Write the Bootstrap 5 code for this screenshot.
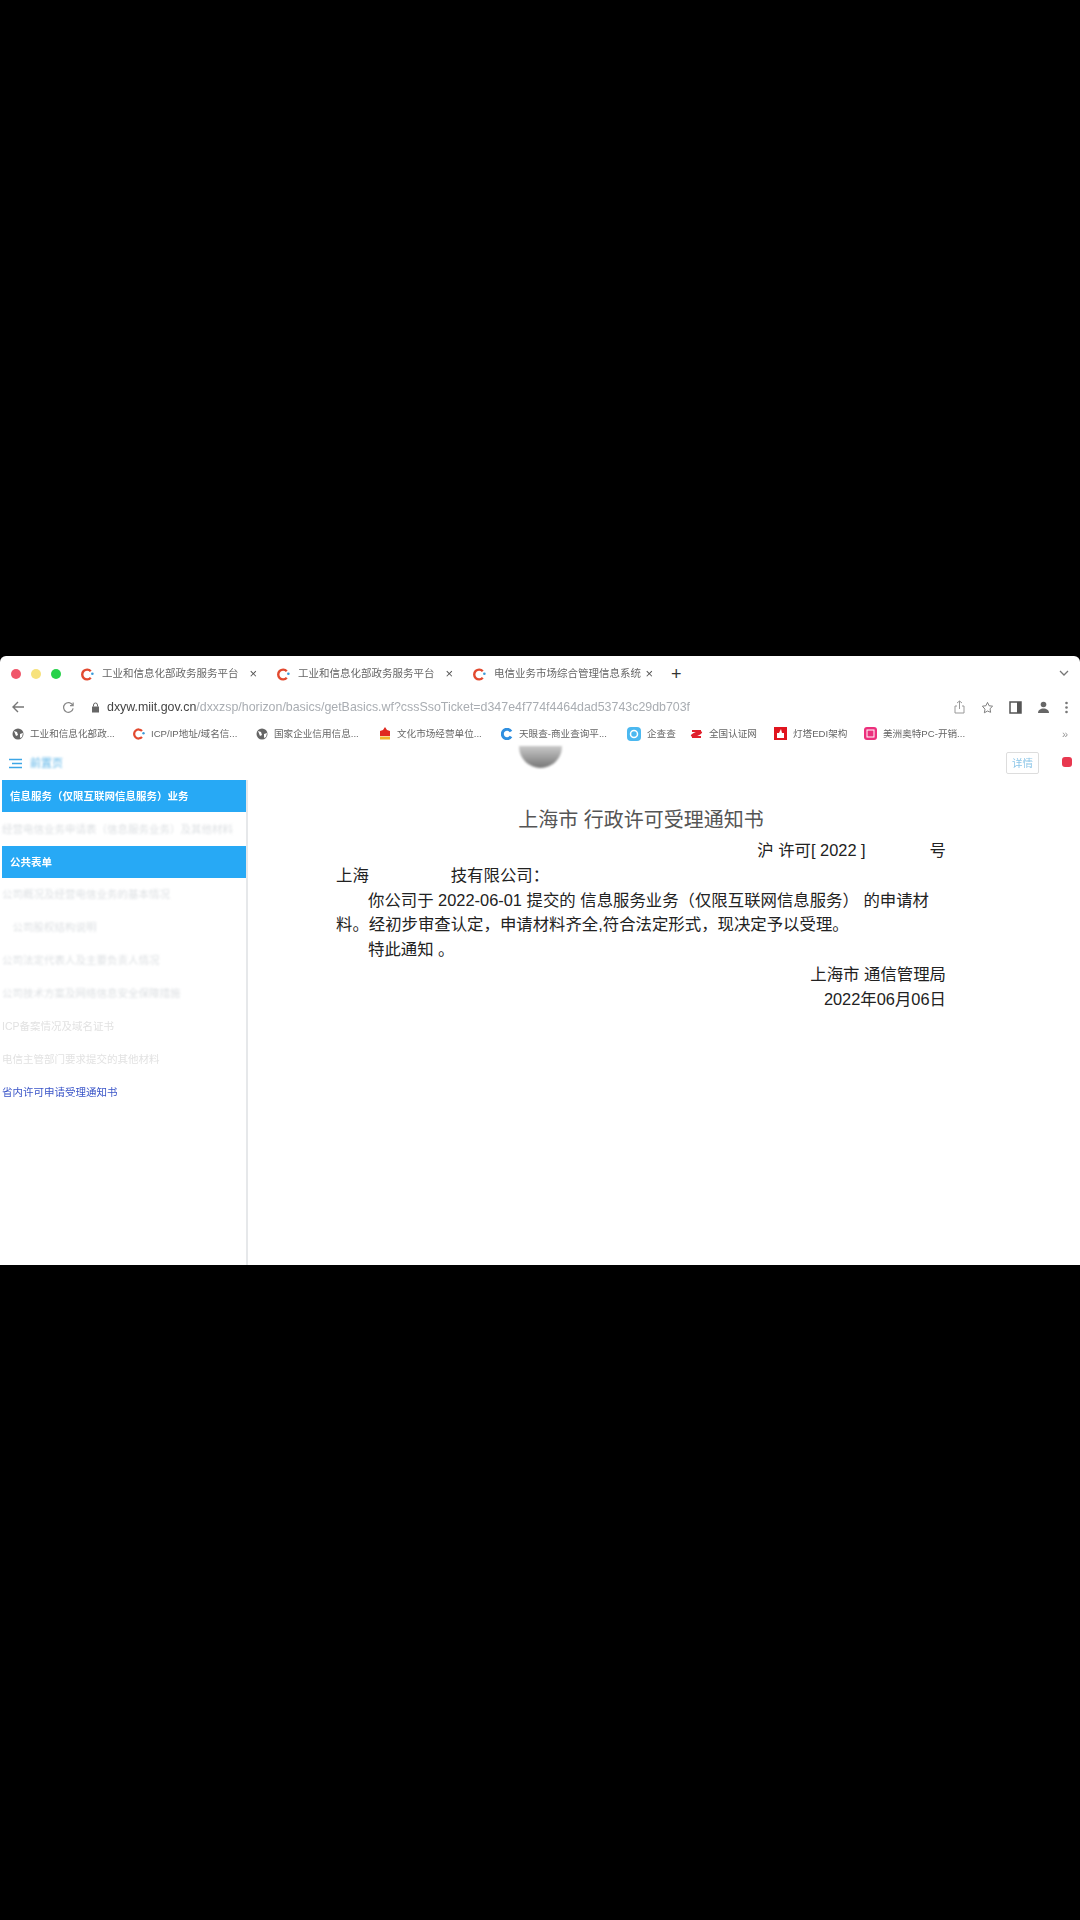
<!DOCTYPE html>
<html lang="zh-CN">
  <head>
    <meta charset="UTF-8" />
    <meta name="viewport" content="width=device-width, initial-scale=1.0" />
    <title>上海市 行政许可受理通知书</title>
    <link href="https://cdn.jsdelivr.net/npm/bootstrap@5.3.0/dist/css/bootstrap.min.css" rel="stylesheet" />
    <style>
      html, body { background: #000; margin: 0; }
      body { font-family: "Liberation Sans", "Noto Sans CJK SC", sans-serif; height: 1920px; overflow: hidden; padding-top: 656px; }
      .screen { background: #fff; height: 609px; width: 1080px; border-radius: 6px 6px 0 0; overflow: hidden; }

      .tabstrip { height: 36px; font-size: 10.5px; color: #666; position: relative; }
      .dot { width: 10px; height: 10px; border-radius: 50%; }
      .dot-red { background: #f0566a; margin-left: 11px; }
      .dot-yellow { background: #f7e27c; margin-left: 10px; }
      .dot-green { background: #27d24a; margin-left: 10px; }
      .tab-item { display: flex; align-items: center; height: 100%; padding-left: 6px; filter: blur(.35px); }
      .tab-one { width: 196px; margin-left: 14px; }
      .tab-two { width: 196px; }
      .tab-three { width: 200px; }
      .tab-item svg { margin-right: 8px; flex: none; }
      .tab-name { flex: 1; white-space: nowrap; overflow: hidden; }
      .tab-close { font-size: 13px; color: #555; margin-right: 14px; }
      .tab-plus { font-size: 18px; color: #333; margin-left: 4px; }
      .tab-chevron { position: absolute; right: 11px; top: 12px; }

      .urlbar { height: 30px; font-size: 12.4px; color: #a9adb2; filter: blur(.35px); }
      .url-main { color: #444; }
      .url-back { margin-left: 11px; }
      .url-reload { margin-left: 37px; }
      .url-lock { margin-left: 16px; margin-right: 7px; }
      .url-text { flex: 1; white-space: nowrap; overflow: hidden; }
      .url-tools { gap: 15px; padding-right: 12px; }

      .bookmarks { height: 24px; font-size: 9.6px; color: #666; padding-left: 12px; position: relative; filter: blur(.4px); }
      .mark-item { display: flex; align-items: center; white-space: nowrap; overflow: hidden; }
      .mark-item svg { flex: none; margin-right: 6px; }
      .mark-a { width: 121px; }
      .mark-b { width: 123px; }
      .mark-c { width: 123px; }
      .mark-d { width: 122px; }
      .mark-e { width: 126px; }
      .mark-f { width: 63px; }
      .mark-g { width: 84px; }
      .mark-h { width: 90px; }
      .mark-i { width: 120px; }
      .mark-more { position: absolute; right: 12px; top: 4px; font-size: 11px; color: #999; }

      .apphead { height: 34px; position: relative; color: #5fb6e8; font-size: 11px; }
      .apphead-title { margin-left: 7px; filter: blur(.8px); }
      .seal { position: absolute; left: 519px; top: 0; width: 43px; height: 22px; background: linear-gradient(#c9c9c9, #777); border-radius: 0 0 22px 22px; filter: blur(.8px); }
      .detail-btn { position: absolute; left: 1006px; top: 6px; width: 33px; height: 22px; border: 1px solid #ddd; border-radius: 2px; color: #8cc6e8; font-size: 10.5px; line-height: 20px; text-align: center; filter: blur(.5px); }
      .plugin-dot { position: absolute; left: 1062px; top: 11px; width: 10px; height: 10px; background: #e8384f; border-radius: 3px; filter: blur(.6px); }

      .workarea { height: 485px; }
      .sidebar { width: 248px; flex: none; border-right: 2px solid #e6e8ea; padding-left: 2px; font-size: 10.5px; }
      .side-head { background: #27a9f5; color: #fff; font-weight: 700; height: 32px; width: 244px; line-height: 32px; padding-left: 8px; font-size: 10.5px; filter: blur(.4px); }
      .side-row { height: 33px; line-height: 33px; white-space: nowrap; overflow: hidden; color: #dcdfe2; filter: blur(.9px); }
      .side-row-first { height: 34px; line-height: 34px; }
      .side-row-link { color: #3a55c8; filter: blur(.2px); }
      .side-row-soft { color: #e2e2e2; filter: blur(.4px); }

      .notice { flex: 1; padding: 25px 0 0 88px; font-size: 16.4px; line-height: 24.8px; color: #222; width: 610px; }
      .notice-sheet { width: 610px; }
      .notice-title { font-size: 20px; line-height: 30px; text-align: center; color: #555; margin-bottom: 3px; }
      .notice-no { text-align: right; }
      .notice-gap { display: inline-block; width: 64px; }
      .notice-body { text-indent: 32px; margin: 0; }
      .notice-end { text-align: right; }
      .notice-hide { color: #fff; }
    </style>
  </head>
  <body>
    <div class="screen">
      <!-- 标签栏 -->
      <div class="tabstrip d-flex align-items-center">
        <span class="dot dot-red"></span>
        <span class="dot dot-yellow"></span>
        <span class="dot dot-green"></span>
        <div class="tab-item tab-one">
          <svg width="13" height="13" viewBox="0 0 16 16"><path d="M12 4A6 6 0 1 0 12 12" fill="none" stroke="#e2492f" stroke-width="3" /><circle cx="14" cy="7" r="1.6" fill="#3a9ad9" /></svg>
          <span class="tab-name">工业和信息化部政务服务平台</span>
          <span class="tab-close">×</span>
        </div>
        <div class="tab-item tab-two">
          <svg width="13" height="13" viewBox="0 0 16 16"><path d="M12 4A6 6 0 1 0 12 12" fill="none" stroke="#e2492f" stroke-width="3" /><circle cx="14" cy="7" r="1.6" fill="#3a9ad9" /></svg>
          <span class="tab-name">工业和信息化部政务服务平台</span>
          <span class="tab-close">×</span>
        </div>
        <div class="tab-item tab-three">
          <svg width="13" height="13" viewBox="0 0 16 16"><path d="M12 4A6 6 0 1 0 12 12" fill="none" stroke="#e2492f" stroke-width="3" /><circle cx="14" cy="7" r="1.6" fill="#3a9ad9" /></svg>
          <span class="tab-name">电信业务市场综合管理信息系统</span>
          <span class="tab-close">×</span>
        </div>
        <span class="tab-plus">+</span>
        <svg class="tab-chevron" width="10" height="10" viewBox="0 0 10 10"><path d="M1 3l4 4 4-4" fill="none" stroke="#777" stroke-width="1.3" /></svg>
      </div>

      <!-- 地址栏 -->
      <div class="urlbar d-flex align-items-center">
        <svg class="url-back" width="14" height="14" viewBox="0 0 14 14"><path d="M13 7H2M7 2L2 7l5 5" fill="none" stroke="#777" stroke-width="1.4" /></svg>
        <svg class="url-reload" width="13" height="13" viewBox="0 0 14 14"><path d="M11.5 4.5A5.2 5.2 0 1 0 12 8M12 1.5v3.4H8.6" fill="none" stroke="#888" stroke-width="1.3" /></svg>
        <svg class="url-lock" width="9" height="11" viewBox="0 0 9 11"><rect x="1" y="4.5" width="7" height="6" fill="#666" /><path d="M2.5 4.5V3a2 2 0 0 1 4 0v1.5" fill="none" stroke="#666" /></svg>
        <span class="url-text"><span class="url-main">dxyw.miit.gov.cn</span>/dxxzsp/horizon/basics/getBasics.wf?cssSsoTicket=d347e4f774f4464dad53743c29db703f</span>
        <div class="url-tools d-flex align-items-center">
          <svg width="13" height="14" viewBox="0 0 13 14"><path d="M4 6H2v7h9V6H9M6.500 9V1M4 3l2.500-2L9 3" fill="none" stroke="#999" /></svg>
          <svg width="13" height="13" viewBox="0 0 14 14"><path d="M7 1.500l1.700 3.600 3.800.5-2.800 2.700.7 3.900L7 10.800l-3.400 1.900.7-3.900L1.500 5.600l3.800-.5z" fill="none" stroke="#777" /></svg>
          <svg width="13" height="13" viewBox="0 0 13 13"><path d="M1 1h11v11H1z" fill="none" stroke="#555" stroke-width="1.5" /><path d="M8 1h4v11H8z" fill="#555" /></svg>
          <svg width="13" height="13" viewBox="0 0 13 13"><circle cx="6.500" cy="3.500" r="2.800" fill="#666" /><path d="M1 12c0-3 2.500-4.500 5.500-4.500S12 9 12 12z" fill="#666" /></svg>
          <svg width="3" height="13" viewBox="0 0 3 13"><circle cx="1.500" cy="2" r="1.300" fill="#777" /><circle cx="1.500" cy="6.500" r="1.300" fill="#777" /><circle cx="1.500" cy="11" r="1.300" fill="#777" /></svg>
        </div>
      </div>

      <!-- 书签栏 -->
      <div class="bookmarks d-flex align-items-center">
        <div class="mark-item mark-a">
          <svg width="12" height="12" viewBox="0 0 12 12"><circle cx="6" cy="6" r="5.500" fill="#666" /><path d="M2 3l3 1 1 3-2 1zM8 6l3-1-1 4-2 1z" fill="#fff" /></svg>工业和信息化部政...
        </div>
        <div class="mark-item mark-b">
          <svg width="12" height="12" viewBox="0 0 16 16"><path d="M12 4A6 6 0 1 0 12 12" fill="none" stroke="#e2492f" stroke-width="3" /><circle cx="14" cy="7" r="1.600" fill="#3a9ad9" /></svg>ICP/IP地址/域名信...
        </div>
        <div class="mark-item mark-c">
          <svg width="12" height="12" viewBox="0 0 12 12"><circle cx="6" cy="6" r="5.500" fill="#666" /><path d="M2 3l3 1 1 3-2 1zM8 6l3-1-1 4-2 1z" fill="#fff" /></svg>国家企业信用信息...
        </div>
        <div class="mark-item mark-d">
          <svg width="12" height="13" viewBox="0 0 12 13"><path d="M6 0l2 3 3 1v5H1V4l3-1z" fill="#e02a20" /><rect x="1" y="9.500" width="10" height="3" fill="#f0b429" /></svg>文化市场经营单位...
        </div>
        <div class="mark-item mark-e">
          <svg width="12" height="12" viewBox="0 0 12 12"><path d="M10 3.500A4.700 4.700 0 1 0 10 8.500" fill="none" stroke="#2f8fe0" stroke-width="3" /></svg>天眼查-商业查询平...
        </div>
        <div class="mark-item mark-f">
          <svg width="14" height="14" viewBox="0 0 14 14"><rect width="14" height="14" rx="4" fill="#4bb8f0" /><circle cx="7" cy="7" r="3.500" fill="none" stroke="#fff" stroke-width="1.500" /></svg>企查查
        </div>
        <div class="mark-item mark-g">
          <svg width="13" height="12" viewBox="0 0 13 12"><ellipse cx="6.500" cy="6" rx="6" ry="2" fill="#e0202c" transform="rotate(-20 6.500 6)" /><path d="M2 3l9 0M2 9l9 0" stroke="#e0202c" stroke-width="2" /></svg>全国认证网
        </div>
        <div class="mark-item mark-h">
          <svg width="13" height="13" viewBox="0 0 13 13"><rect width="13" height="13" fill="#e0141e" /><path d="M3 6h7v5H3zM5 6l2-4 1 4" fill="#fff" /></svg>灯塔EDI架构
        </div>
        <div class="mark-item mark-i">
          <svg width="13" height="13" viewBox="0 0 13 13"><rect width="13" height="13" rx="3" fill="#ec2f7c" /><rect x="3" y="3" width="7" height="7" fill="none" stroke="#fff" /></svg>美洲奥特PC-开销...
        </div>
        <span class="mark-more">»</span>
      </div>

      <!-- 页面头部 -->
      <div class="apphead d-flex align-items-center">
        <svg class="ms-2" width="15" height="11" viewBox="0 0 15 11"><path d="M1 1.500h13M4 5.500h10M1 9.500h13" stroke="#3da6e6" stroke-width="1.500" /></svg>
        <span class="apphead-title">前置页</span>
        <div class="seal"></div>
        <div class="detail-btn">详情</div>
        <div class="plugin-dot"></div>
      </div>

      <div class="workarea d-flex">
        <!-- 左侧菜单 -->
        <div class="sidebar">
          <div class="side-head">信息服务（仅限互联网信息服务）业务</div>
          <div class="side-row side-row-first">经营电信业务申请表（信息服务业务）及其他材料</div>
          <div class="side-head">公共表单</div>
          <div class="side-row">公司概况及经营电信业务的基本情况</div>
          <div class="side-row">&emsp;公司股权结构说明</div>
          <div class="side-row">公司法定代表人及主要负责人情况</div>
          <div class="side-row">公司技术方案及网络信息安全保障措施</div>
          <div class="side-row side-row-soft">ICP备案情况及域名证书</div>
          <div class="side-row side-row-soft">电信主管部门要求提交的其他材料</div>
          <div class="side-row side-row-link">省内许可申请受理通知书</div>
        </div>

        <!-- 通知书 -->
        <div class="notice">
          <div class="notice-sheet">
            <div class="notice-title">上海市 行政许可受理通知书</div>
            <div class="notice-no">沪 许可[ 2022 ]<span class="notice-gap"></span>号</div>
            <div>上海<span class="notice-hide">某某某某科</span>技有限公司：</div>
            <p class="notice-body">你公司于 2022-06-01 提交的 信息服务业务（仅限互联网信息服务） 的申请材料。经初步审查认定，申请材料齐全,符合法定形式，现决定予以受理。</p>
            <p class="notice-body">特此通知 。</p>
            <div class="notice-end">上海市 通信管理局</div>
            <div class="notice-end">2022年06月06日</div>
          </div>
        </div>
      </div>
    </div>

    <script src="https://cdn.jsdelivr.net/npm/bootstrap@5.3.0/dist/js/bootstrap.bundle.min.js"></script>
  </body>
</html>
